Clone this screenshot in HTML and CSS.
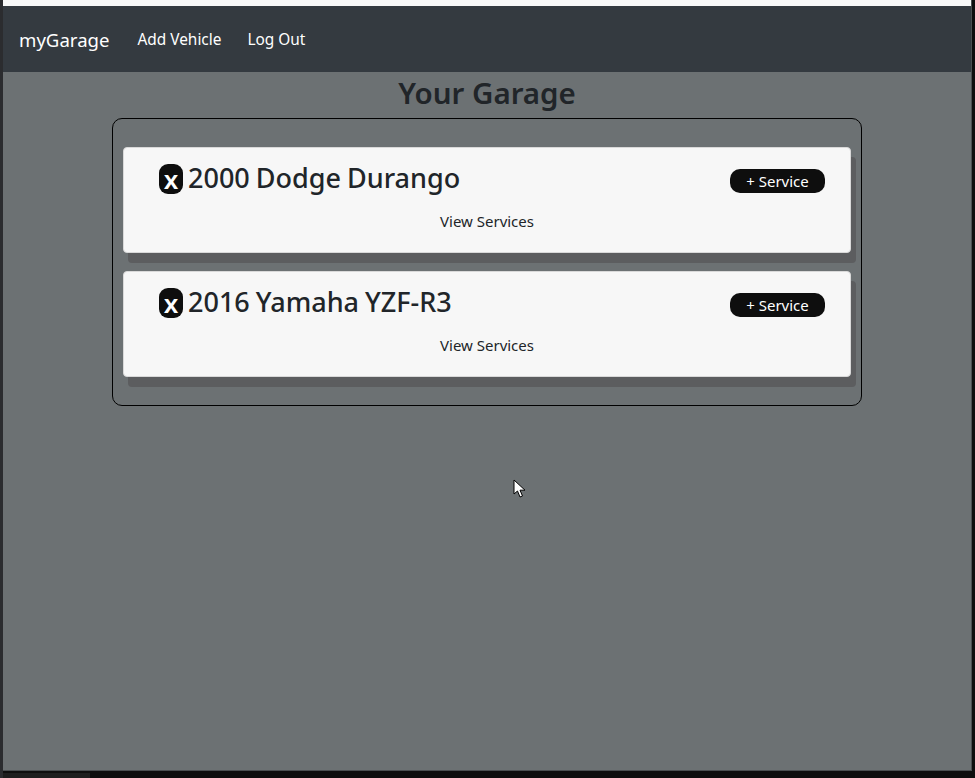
FILE: index.html
```html
<!DOCTYPE html>
<html lang="en">
  <head>
    <meta charset="UTF-8" />
    <meta name="viewport" content="width=device-width, initial-scale=1.0" />
    <title>myGarage</title>
    <link rel="stylesheet" href="styles.css">
  </head>
  <body>
    <div class="window">
      <div class="top-strip"></div>

      <!-- Navbar -->
      <nav class="navbar">
        <a class="brand" href="#">myGarage</a>
        <a class="nav-link" href="#">Add Vehicle</a>
        <a class="nav-link" href="#">Log Out</a>
      </nav>

      <!-- Garage -->
      <main class="content">
        <h1 class="page-title">Your Garage</h1>
        <div class="garage">
          <div class="vehicle">
            <div class="vehicle-head">
              <h3 class="vehicle-name"><button class="delete-btn">x</button> 2000 Dodge Durango</h3>
              <button class="service-btn">+ Service</button>
            </div>
            <a class="view-link" href="#">View Services</a>
          </div>
          <div class="vehicle">
            <div class="vehicle-head">
              <h3 class="vehicle-name"><button class="delete-btn">x</button> 2016 Yamaha YZF-R3</h3>
              <button class="service-btn">+ Service</button>
            </div>
            <a class="view-link" href="#">View Services</a>
          </div>
        </div>
      </main>

      <!-- Mouse pointer -->
      <svg class="cursor" width="14" height="20" viewBox="0 0 14 20">
        <path d="M1 1 L1 15 L4.5 12 L7 18 L9.5 17 L7 11.2 L12 11.2 Z" fill="#fff" stroke="#000" stroke-width="1" />
      </svg>
    </div>
    <div class="bottom-tab"></div>
  </body>
</html>
```

FILE: styles.css
```css
body {
  font-family: "Noto Sans", "Open Sans", Arial, sans-serif;
  background-color: #0e0e0e;
  margin: 0;
  padding: 0;
  height: 778px;
  overflow: hidden;
  border-left: 3px solid #2b2c2f;
  box-sizing: border-box;
}

.window {
  position: relative;
  box-sizing: border-box;
  width: 969px;
  height: 771px;
  background-color: #6c7173;
  border-right: 1px solid #4b4f51;
  border-bottom: 1px solid #4b4f51;
}

.top-strip {
  height: 6px;
  background-color: #f8f8f8;
}

.navbar {
  display: flex;
  align-items: center;
  height: 66px;
  padding-left: 16px;
  background-color: #343a40;
}

.brand {
  font-size: 18.6px;
  color: #fff;
  text-decoration: none;
  margin-right: 28px;
}

.nav-link {
  font-size: 15.4px;
  color: #fff;
  text-decoration: none;
  margin-right: 26px;
}

.content {
  display: flex;
  flex-direction: column;
  align-items: center;
}

.page-title {
  margin: 0;
  height: 46px;
  line-height: 42px;
  font-size: 29.5px;
  font-weight: 600;
  color: #212529;
}

.garage {
  box-sizing: border-box;
  width: 750px;
  height: 288px;
  padding: 28px 10px 0;
  border: 1px solid #000;
  border-radius: 10px;
}

.vehicle {
  box-sizing: border-box;
  height: 106px;
  margin-bottom: 18px;
  padding-top: 13px;
  background-color: #f7f7f7;
  border: 1px solid #d9d9d9;
  border-radius: 4px;
  box-shadow: 5px 10px 0 #5c5d5f;
  text-align: center;
}

.vehicle-head {
  display: flex;
  justify-content: space-between;
  align-items: center;
  padding: 0 25px 0 35px;
}

.vehicle-name {
  margin: 0;
  font-size: 27px;
  font-weight: 500;
  line-height: 34px;
  word-spacing: -1px;
  color: #212529;
  text-align: left;
}

.delete-btn {
  width: 24px;
  height: 30px;
  padding: 0;
  margin-right: -1px;
  border: none;
  border-radius: 9px;
  background-color: #0e0e0e;
  color: #fff;
  font-family: inherit;
  font-size: 26px;
  font-weight: 600;
  line-height: 26px;
  vertical-align: -1px;
}

.service-btn {
  width: 95px;
  height: 24px;
  padding: 0;
  border: none;
  border-radius: 10px;
  background-color: #0e0e0e;
  color: #fff;
  font-family: inherit;
  font-size: 15px;
  margin-top: 5px;
}

.view-link {
  display: inline-block;
  margin-top: 16px;
  font-size: 15px;
  color: #212529;
  text-decoration: none;
}

.bottom-tab {
  width: 87px;
  height: 5px;
  margin-top: 2px;
  background-color: #1e1e1e;
}

.cursor {
  position: absolute;
  left: 510px;
  top: 479px;
}
```
